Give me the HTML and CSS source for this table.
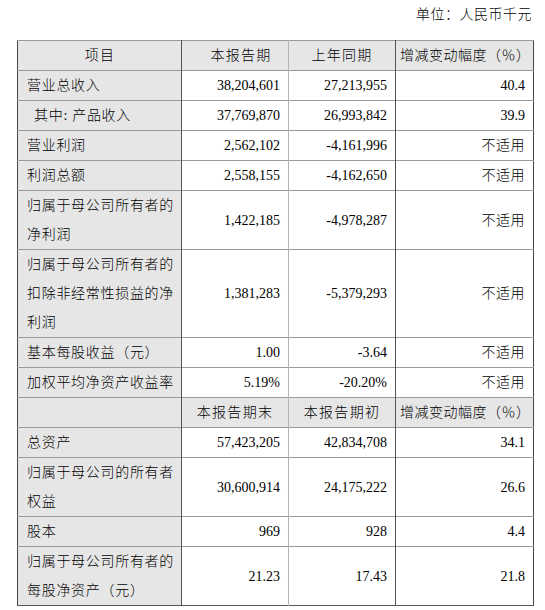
FILE: index.html
```html
<!DOCTYPE html>
<html lang="zh-CN">
<head>
<meta charset="utf-8">
<title>主要财务数据</title>
<link rel="stylesheet" href="styles.css">
</head>
<body>
<div class="page">
  <div class="unit">单位：人民币千元</div>
  <table class="fin">
    <colgroup>
      <col class="c1"><col class="c2"><col class="c3"><col class="c4">
    </colgroup>
    <tr class="head">
      <td class="item center">项目</td>
      <td class="num center zh first-head">本报告期</td>
      <td class="num center zh">上年同期</td>
      <td class="pct center zh">增减变动幅度（％）</td>
    </tr>
    <tr>
      <td class="item">营业总收入</td>
      <td class="num">38,204,601</td>
      <td class="num">27,213,955</td>
      <td class="pct">40.4</td>
    </tr>
    <tr>
      <td class="item indent">其中: 产品收入</td>
      <td class="num">37,769,870</td>
      <td class="num">26,993,842</td>
      <td class="pct">39.9</td>
    </tr>
    <tr>
      <td class="item">营业利润</td>
      <td class="num">2,562,102</td>
      <td class="num">-4,161,996</td>
      <td class="pct zh">不适用</td>
    </tr>
    <tr>
      <td class="item">利润总额</td>
      <td class="num">2,558,155</td>
      <td class="num">-4,162,650</td>
      <td class="pct zh">不适用</td>
    </tr>
    <tr>
      <td class="item">归属于母公司所有者的<br>净利润</td>
      <td class="num">1,422,185</td>
      <td class="num">-4,978,287</td>
      <td class="pct zh">不适用</td>
    </tr>
    <tr>
      <td class="item">归属于母公司所有者的<br>扣除非经常性损益的净<br>利润</td>
      <td class="num">1,381,283</td>
      <td class="num">-5,379,293</td>
      <td class="pct zh">不适用</td>
    </tr>
    <tr>
      <td class="item">基本每股收益（元）</td>
      <td class="num">1.00</td>
      <td class="num">-3.64</td>
      <td class="pct zh">不适用</td>
    </tr>
    <tr>
      <td class="item">加权平均净资产收益率</td>
      <td class="num">5.19%</td>
      <td class="num">-20.20%</td>
      <td class="pct zh">不适用</td>
    </tr>
    <tr class="head">
      <td class="item"></td>
      <td class="num center zh">本报告期末</td>
      <td class="num center zh">本报告期初</td>
      <td class="pct center zh">增减变动幅度（％）</td>
    </tr>
    <tr>
      <td class="item">总资产</td>
      <td class="num">57,423,205</td>
      <td class="num">42,834,708</td>
      <td class="pct">34.1</td>
    </tr>
    <tr>
      <td class="item">归属于母公司的所有者<br>权益</td>
      <td class="num">30,600,914</td>
      <td class="num">24,175,222</td>
      <td class="pct">26.6</td>
    </tr>
    <tr>
      <td class="item">股本</td>
      <td class="num">969</td>
      <td class="num">928</td>
      <td class="pct">4.4</td>
    </tr>
    <tr>
      <td class="item">归属于母公司所有者的<br>每股净资产（元）</td>
      <td class="num">21.23</td>
      <td class="num">17.43</td>
      <td class="pct">21.8</td>
    </tr>
  </table>
</div>
</body>
</html>
```

FILE: styles.css
```css
html, body {
  margin: 0;
  padding: 0;
  background: #ffffff;
}

body {
  font-family: "Liberation Serif", "Noto Sans CJK SC", serif;
  font-size: 14px;
  color: #000000;
}

.page {
  padding: 0 12px 0 17px;
  width: 516px;
}

.unit {
  height: 29px;
  line-height: 29px;
  text-align: right;
  font-weight: 300;
  letter-spacing: 0.5px;
  margin-bottom: 11px;
  padding-right: 1px;
}

.fin {
  border-collapse: collapse;
  table-layout: fixed;
  width: 516px;
  border-top: 1px solid #333333;
  border-bottom: 1px solid #555555;
  border-left: 1px solid #444444;
  border-right: 1px solid #444444;
}

.c1 { width: 164px; }
.c2 { width: 107px; }
.c3 { width: 107px; }
.c4 { width: 138px; }

.fin td {
  padding: 0 8px 0 8px;
  line-height: 29px;
  border-top: 1px solid #9a9a9a;
  vertical-align: middle;
  white-space: nowrap;
  font-weight: 300;
}

.fin td.item {
  background: #e6e6e6;
  border-right: 1px solid #555555;
  padding-left: 9px;
  letter-spacing: 0.7px;
  text-align: left;
}

.fin td.item.indent {
  padding-left: 16px;
}

.fin td.num {
  text-align: right;
  border-right: 1px solid #b4b4b4;
}

.fin td.num + td.num {
  border-right: 1px solid #555555;
}

.fin td.pct {
  text-align: right;
}

.fin td.zh {
  letter-spacing: 0.5px;
}

.fin tr.head td {
  background: #e6e6e6;
  letter-spacing: 1.3px;
}

.fin tr.head td.center {
  text-align: center;
}

.fin tr.head td.pct {
  letter-spacing: 0.5px;
  padding: 0 4px;
}

.fin tr.head td.first-head {
  padding-left: 20px;
}
```
